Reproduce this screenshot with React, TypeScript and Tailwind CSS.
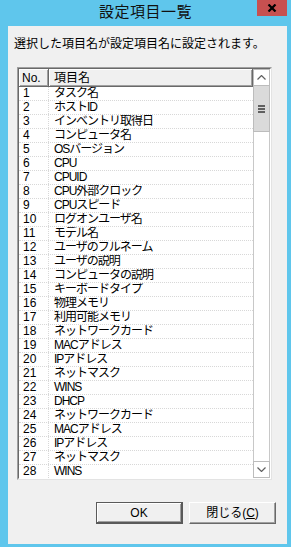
import React from "react";

const items = [
  "タスク名","ホストID","インベントリ取得日","コンピュータ名","OSバージョン","CPU","CPUID","CPU外部クロック","CPUスピード","ログオンユーザ名","モデル名","ユーザのフルネーム","ユーザの説明","コンピュータの説明","キーボードタイプ","物理メモリ","利用可能メモリ","ネットワークカード","MACアドレス","IPアドレス","ネットマスク","WINS","DHCP","ネットワークカード","MACアドレス","IPアドレス","ネットマスク","WINS",
];

const font = { fontFamily: '"Liberation Sans", "Noto Sans CJK JP", sans-serif' };

export default function App() {
  return (
    <div className="w-[291px] h-[547px] bg-[#5fc6ec] flex flex-col text-black" style={font}>
      <div className="h-[26px] relative flex items-center justify-center">
        <span className="text-[15px] leading-none text-[#111] mt-[-3px] tracking-[0.5px]">設定項目一覧</span>
        <div className="absolute right-[4px] top-0 w-[30px] h-[16px] bg-[#c75050] flex items-center justify-center">
          <svg width="10" height="8" viewBox="0 0 10 8">
            <path d="M1.5 0.5 L8.5 7.5 M8.5 0.5 L1.5 7.5" stroke="#000" strokeWidth="2.2" />
          </svg>
        </div>
      </div>
      <div className="flex-1 ml-[8px] mr-[4px] mb-[3px] bg-[#f0f0f0] flex flex-col">
        <div className="h-[41px] pl-[6px] pt-[9px] text-[12px] leading-[18px] whitespace-nowrap">選択した項目名が設定項目名に設定されます。</div>
        <div className="ml-[9px] mr-[15px] h-[413px] border border-t-[#a0a0a0] border-l-[#a0a0a0] border-r-[#e3e3e3] border-b-[#e3e3e3] flex">
          <div className="flex-1 flex border border-t-[#696969] border-l-[#696969] border-r-white border-b-white bg-white overflow-hidden">
            <div className="flex-1 flex flex-col overflow-hidden">
              <div className="h-[18px] flex shrink-0 text-[12px] bg-[#f0f0f0]">
                <div className="w-[30px] pl-[3px] flex items-center border-r border-b border-[#696969] shadow-[inset_1px_1px_0_#fff,inset_-1px_-1px_0_#a0a0a0]">No.</div>
                <div className="flex-1 pl-[5px] flex items-center border-r border-b border-[#696969] shadow-[inset_1px_1px_0_#fff,inset_-1px_-1px_0_#a0a0a0]">項目名</div>
              </div>
              {items.map((name, i) => (
                <div key={i} className="h-[14px] shrink-0 flex text-[12px] leading-[13px] border-b border-dotted border-[#d8d8d8]">
                  <div className="w-[30px] pl-[4px] border-r border-dotted border-[#d8d8d8]">{i + 1}</div>
                  <div className="flex-1 pl-[5px] whitespace-nowrap overflow-hidden tracking-[-1px]">{name}</div>
                </div>
              ))}
            </div>
            <div className="w-[17px] flex flex-col bg-white">
              <div className="h-[17px] border border-[#bcbcbc] bg-white flex items-center justify-center shrink-0">
                <svg width="9" height="5" viewBox="0 0 9 5"><path d="M0.5 4.5 L4.5 0.5 L8.5 4.5" stroke="#606060" strokeWidth="1.2" fill="none" /></svg>
              </div>
              <div className="h-[46px] border border-[#bcbcbc] border-t-0 bg-[#dadada] flex flex-col items-center justify-center gap-[1px] shrink-0">
                <div className="w-[7px] h-[2px] bg-[#606060]" />
                <div className="w-[7px] h-[2px] bg-[#606060]" />
                <div className="w-[7px] h-[2px] bg-[#606060]" />
              </div>
              <div className="flex-1 border-l border-r border-[#c8c8c8] bg-white" />
              <div className="h-[17px] border border-[#bcbcbc] bg-white flex items-center justify-center shrink-0">
                <svg width="9" height="5" viewBox="0 0 9 5"><path d="M0.5 0.5 L4.5 4.5 L8.5 0.5" stroke="#606060" strokeWidth="1.2" fill="none" /></svg>
              </div>
            </div>
          </div>
        </div>
        <div className="flex justify-end gap-[6px] mt-[22px] pr-[11px]">
          <div className="w-[87px] h-[22px] border border-[#5a5a5a] border-r-2 border-b-2 shadow-[inset_1px_1px_0_#fff,inset_-1px_-1px_0_#a0a0a0] bg-[#f0f0f0] flex items-center justify-center text-[12px]">OK</div>
          <div className="w-[87px] h-[22px] border border-t-white border-l-white border-r-[#696969] border-b-[#696969] shadow-[inset_-1px_-1px_0_#a0a0a0] bg-[#f0f0f0] flex items-center justify-center text-[12px]">
            閉じる(<span className="underline">C</span>)
          </div>
        </div>
      </div>
    </div>
  );
}
